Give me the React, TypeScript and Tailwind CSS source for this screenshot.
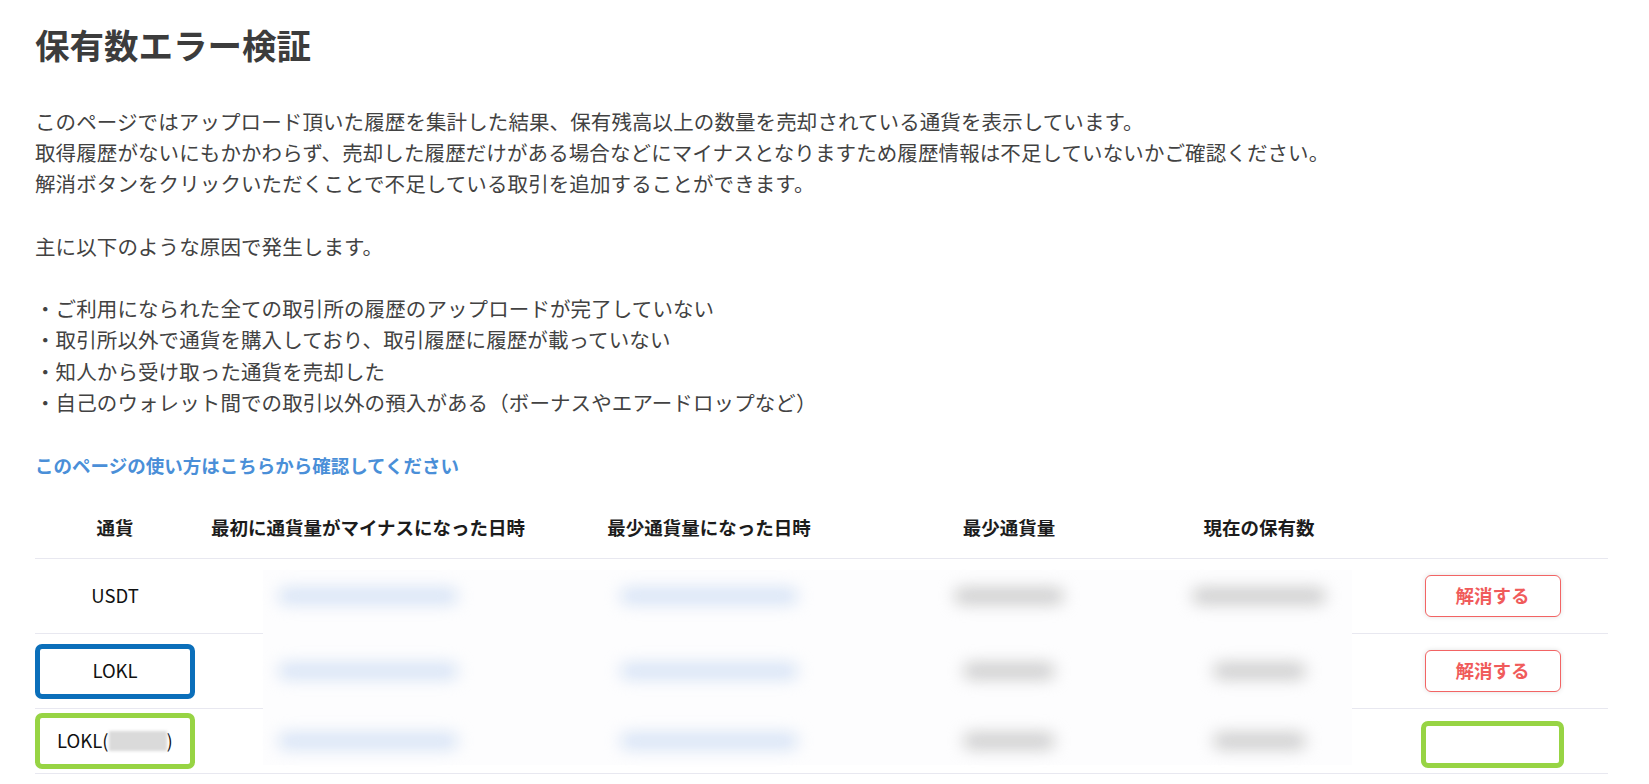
import React from 'react';

type Row = {
  coin: React.ReactNode;
  highlight?: 'blue' | 'green';
  minW: number;
  nowW: number;
  action: 'button' | 'empty';
  h: string;
};

const rows: Row[] = [
  { coin: 'USDT', minW: 110, nowW: 134, action: 'button', h: 'h-[75px]' },
  { coin: 'LOKL', highlight: 'blue', minW: 92, nowW: 93, action: 'button', h: 'h-[75px]' },
  {
    coin: (
      <span className="flex items-center">
        LOKL(
        <span className="inline-block h-[20px] w-[58px] bg-[#dadada] blur-[1.5px]" />)
      </span>
    ),
    highlight: 'green',
    minW: 92,
    nowW: 93,
    action: 'empty',
    h: 'h-[65px]',
  },
];

const headers = ['通貨', '最初に通貨量がマイナスになった日時', '最少通貨量になった日時', '最少通貨量', '現在の保有数', ''];

function BlurBar({ w, tone }: { w: number; tone: 'blue' | 'gray' }) {
  return (
    <div
      className={`relative z-10 h-[16px] rounded-full blur-[8px] ${tone === 'blue' ? 'bg-[#d5e2f5]' : 'bg-[#cbcbcb]'}`}
      style={{ width: w }}
    />
  );
}

export default function App() {
  return (
    <div className="min-h-screen bg-white font-['Noto_Sans_CJK_JP','Noto_Sans',sans-serif]">
      <div className="pl-[35px] pr-[41px] pt-[23px]">
        <h1 className="text-[34.5px] leading-[42px] font-bold text-[#3c3c3c]">保有数エラー検証</h1>

        <p className="mt-[41px] text-[20.5px] leading-[31.2px] tracking-[0.1px] text-[#424242]">
          このページではアップロード頂いた履歴を集計した結果、保有残高以上の数量を売却されている通貨を表示しています。
          <br />
          取得履歴がないにもかかわらず、売却した履歴だけがある場合などにマイナスとなりますため履歴情報は不足していないかご確認ください。
          <br />
          解消ボタンをクリックいただくことで不足している取引を追加することができます。
          <br />
          <br />
          主に以下のような原因で発生します。
          <br />
          <br />
          ・ご利用になられた全ての取引所の履歴のアップロードが完了していない
          <br />
          ・取引所以外で通貨を購入しており、取引履歴に履歴が載っていない
          <br />
          ・知人から受け取った通貨を売却した
          <br />
          ・自己のウォレット間での取引以外の預入がある（ボーナスやエアードロップなど）
        </p>

        <a className="mt-[33px] block text-[18.5px] leading-[28px] font-bold text-[#4a8fd8]">
          このページの使い方はこちらから確認してください
        </a>

        {/* table */}
        <div className="mt-[19px]">
          <div className="grid h-[61px] grid-cols-[160px_346px_336px_264px_236px_1fr] border-b border-[#e8e8f0]">
            {headers.map((h, i) => (
              <div key={i} className="flex items-center justify-center text-[18.5px] font-bold text-[#1c1c1c]">
                {h}
              </div>
            ))}
          </div>

          <div className="relative">
            {rows.map((r, i) => (
              <div
                key={i}
                className={`grid ${r.h} grid-cols-[160px_346px_336px_264px_236px_1fr] border-b border-[#e8e8f0]`}
              >
                <div className="flex items-center justify-center">
                  <div
                    className={`flex w-full items-center justify-center text-[18.5px] text-[#111] ${
                      r.highlight === 'blue'
                        ? 'h-[55px] rounded-[7px] border-[5px] border-[#0b6fba]'
                        : r.highlight === 'green'
                        ? 'h-[56px] rounded-[7px] border-[5px] border-[#97d444]'
                        : ''
                    }`}
                  >
                    {r.coin}
                  </div>
                </div>
                <div className="flex items-center justify-center">
                  <BlurBar w={180} tone="blue" />
                </div>
                <div className="flex items-center justify-center">
                  <BlurBar w={178} tone="blue" />
                </div>
                <div className="flex items-center justify-center">
                  <BlurBar w={r.minW} tone="gray" />
                </div>
                <div className="flex items-center justify-center">
                  <BlurBar w={r.nowW} tone="gray" />
                </div>
                <div className="flex items-center justify-center">
                  {r.action === 'button' ? (
                    <button className="h-[42px] w-[136px] rounded-[6px] border border-[#f26464] bg-white text-[18.5px] font-bold text-[#f05b5b] shadow-[0_0_5px_rgba(0,0,0,0.12)]">
                      解消する
                    </button>
                  ) : (
                    <div className="mt-[6px] h-[47px] w-[143px] rounded-[7px] border-[5px] border-[#97d444]" />
                  )}
                </div>
              </div>
            ))}

            {/* masked area over the date / amount columns */}
            <div className="absolute top-[11px] left-[228px] z-[1] h-[195px] w-[1089px] bg-[#fdfdfe]" />
          </div>
        </div>
      </div>
    </div>
  );
}
